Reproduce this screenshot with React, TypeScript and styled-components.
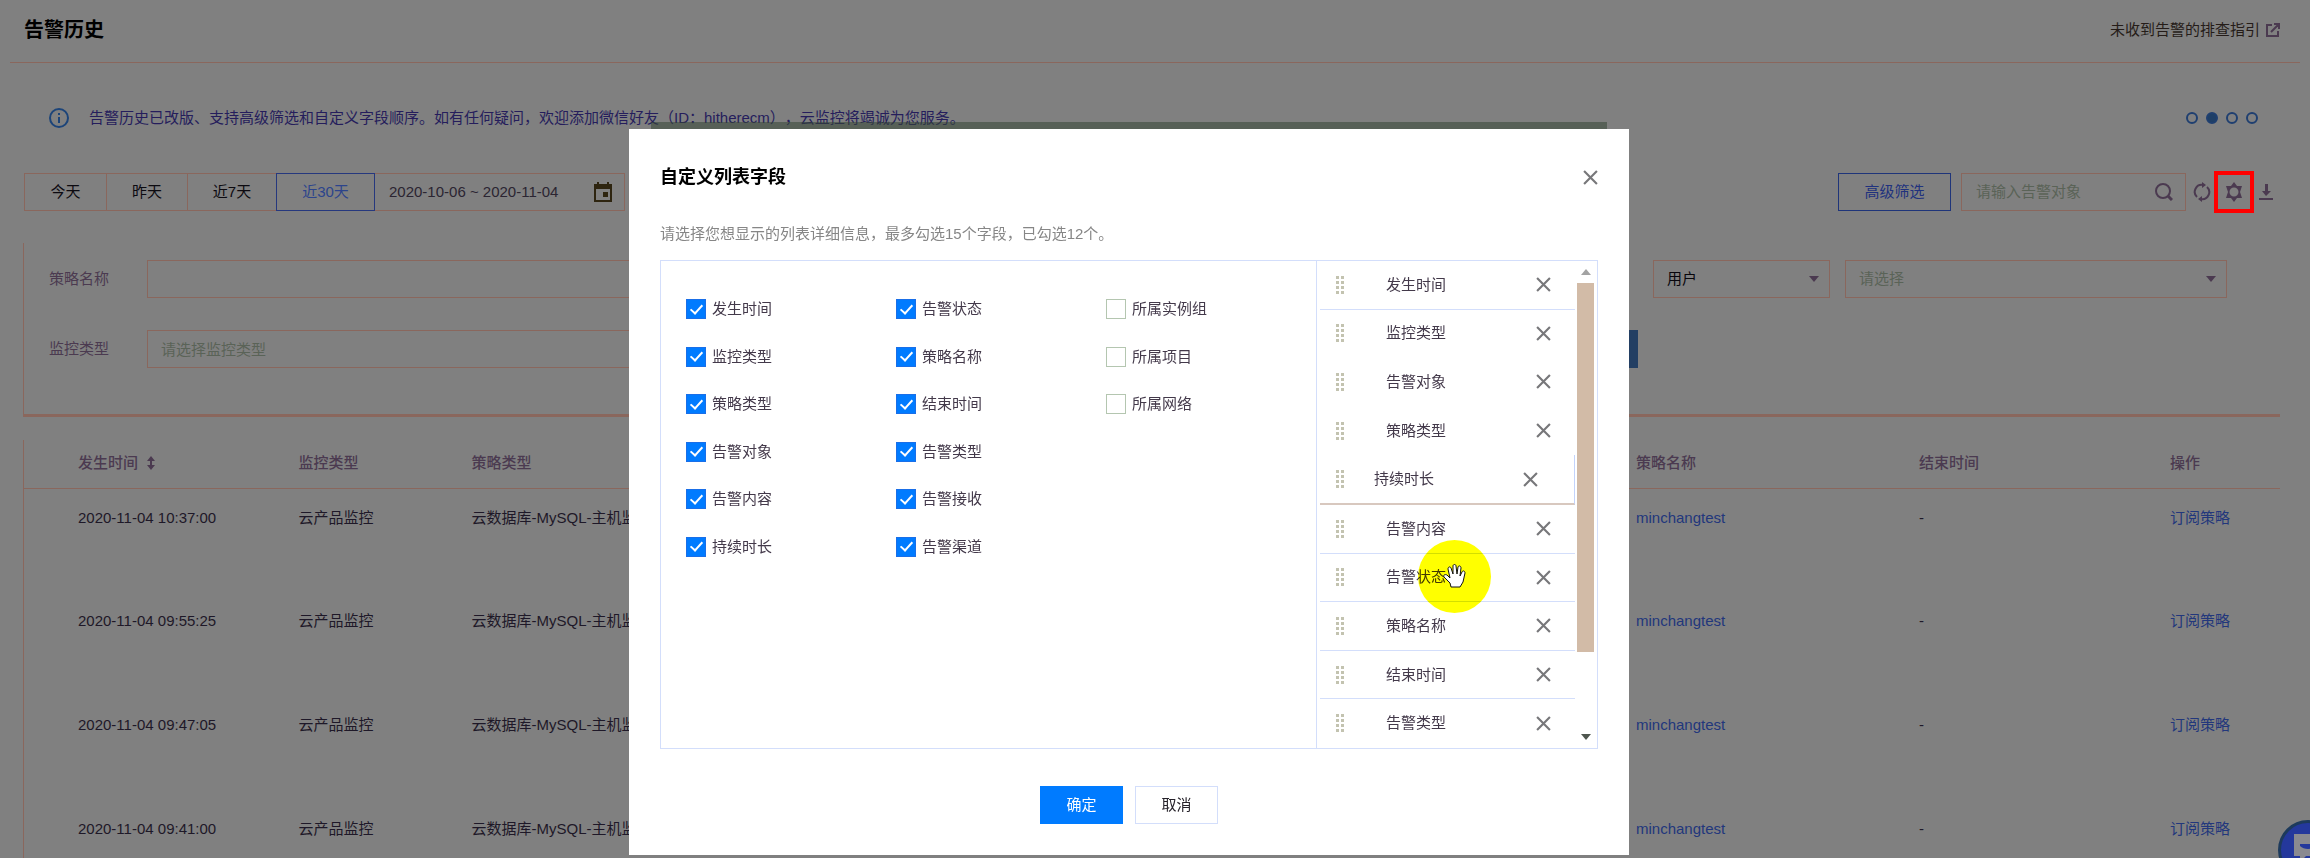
import React from "react";
import styled, { createGlobalStyle, css } from "styled-components";

const line = "#8a675d";
const navy = "#22377c";
const plum = "#4b3a50";

const GlobalStyle = createGlobalStyle`
  * { box-sizing: border-box; }
  body {
    margin: 0;
    background: #808080;
    color: #1e1828;
    font: 15px/24px "Liberation Sans", "Noto Sans CJK SC", sans-serif;
    text-spacing-trim: space-all;
  }
  button, input, select { font: inherit; color: inherit; }
  a { color: ${navy}; text-decoration: none; }
`;

const Page = styled.main`
  height: 100vh;
  overflow: hidden;
  background: #808080;
`;

const Header = styled.header`
  display: flex;
  justify-content: space-between;
  align-items: center;
  height: 63px;
  margin: 0 10px;
  padding: 0 20px 2px 14px;
  border-bottom: 1px solid ${line};
`;

const Title = styled.h1`
  margin: 0;
  font-size: 20px;
  line-height: 28px;
  color: #000;
`;

const GuideLink = styled.a`
  display: flex;
  align-items: center;
  gap: 6px;
  color: #251c18;
  svg { color: ${plum}; }
`;

const Notice = styled.section`
  display: flex;
  align-items: center;
  gap: 19px;
  height: 110px;
  padding: 0 52px 0 48px;
  color: #251d5c;
`;

const NoticeText = styled.p`
  flex: 1;
  margin: 0;
`;

const Pager = styled.div`
  display: flex;
  gap: 8px;
`;

const Dot = styled.button<{ $on?: boolean }>`
  width: 12px;
  height: 12px;
  padding: 0;
  border: 2px solid #1f3f70;
  border-radius: 50%;
  background: ${(p) => (p.$on ? "#1f3f66" : "transparent")};
`;

const Toolbar = styled.section`
  display: flex;
  justify-content: space-between;
  height: 38px;
  padding: 0 34px 0 24px;
`;

const Group = styled.div`
  display: flex;
  align-items: center;
`;

const RangeButton = styled.button<{ $width: number; $active?: boolean }>`
  width: ${(p) => p.$width}px;
  height: 38px;
  padding: 0;
  border: 1px solid ${line};
  border-right-width: 0;
  background: none;
  color: #0c0a10;
  ${(p) =>
    p.$active &&
    css`
      border: 1px solid #26387e;
      color: #2c448c;
    `}
`;

const Box = styled.div<{ $width: number; $flushLeft?: boolean }>`
  display: flex;
  align-items: center;
  width: ${(p) => p.$width}px;
  height: 38px;
  padding: 0 12px;
  border: 1px solid ${line};
  border-left-width: ${(p) => (p.$flushLeft ? 0 : 1)}px;
`;

const PlainInput = styled.input`
  flex: 1;
  min-width: 0;
  padding: 0 0 0 2px;
  border: 0;
  background: none;
  color: #2b2532;
  &::placeholder { color: #5a6357; opacity: 1; }
`;

const AdvancedButton = styled.button`
  width: 113px;
  height: 38px;
  margin-right: 10px;
  padding: 0;
  border: 1px solid #1f357a;
  background: none;
  color: #20327e;
`;

const IconButton = styled.button<{ $marked?: boolean }>`
  display: flex;
  align-items: center;
  justify-content: center;
  width: ${(p) => (p.$marked ? 40 : 20)}px;
  height: ${(p) => (p.$marked ? 42 : 38)}px;
  padding: 0;
  border: ${(p) => (p.$marked ? "4px solid #ff0000" : "0")};
  background: none;
  color: ${plum};
`;

const Tools = styled(Group)`
  padding-left: 6px;
  gap: 2px;
`;

const Filters = styled.section`
  display: grid;
  grid-template-columns: 1fr 177px 382px;
  grid-auto-rows: 38px;
  gap: 32px 15px;
  height: 174px;
  margin: 32px 30px 0 23px;
  padding: 17px 53px 0 25px;
  border-left: 1px solid ${line};
  border-bottom: 3px solid ${line};
`;

const Field = styled.div`
  display: flex;
  align-items: center;
`;

const FieldLabel = styled.label`
  flex: none;
  width: 98px;
  color: ${plum};
`;

const FieldInput = styled.input`
  flex: 1;
  height: 38px;
  padding: 0 13px;
  border: 1px solid ${line};
  background: none;
  &::placeholder { color: #5a6357; opacity: 1; }
`;

const QueryButton = styled.button`
  width: 84px;
  height: 38px;
  margin-left: 120px;
  border: 0;
  background: #233f63;
`;

/* The name field stops short of the user selector. */
const NameInput = styled(FieldInput)`
  margin-right: 120px;
`;

const SelectBox = styled.div<{ $muted?: boolean }>`
  position: relative;
  height: 38px;
  color: ${(p) => (p.$muted ? "#5a6357" : "#08060c")};
  svg {
    position: absolute;
    right: 11px;
    top: 15px;
    color: ${plum};
    pointer-events: none;
  }
`;

const Select = styled.select`
  appearance: none;
  width: 100%;
  height: 38px;
  padding: 0 13px;
  border: 1px solid ${line};
  border-radius: 0;
  background: none;
`;

const History = styled.table`
  width: calc(100% - 53px);
  margin: 23px 30px 0 23px;
  table-layout: fixed;
  border-collapse: collapse;
  border-left: 1px solid ${line};
`;

const Th = styled.th<{ $width?: number; $first?: boolean }>`
  width: ${(p) => (p.$width ? `${p.$width}px` : "auto")};
  height: 48px;
  padding: 0 0 2px ${(p) => (p.$first ? 54 : 0)}px;
  border-bottom: 1px solid ${line};
  text-align: left;
  font-weight: 500;
  color: ${plum};
  svg { margin-left: 8px; vertical-align: -2px; }
`;

const Td = styled.td<{ $first?: boolean }>`
  height: 104px;
  padding: 17px 0 0 ${(p) => (p.$first ? 54 : 0)}px;
  vertical-align: top;
`;

const ChatButton = styled.button`
  position: fixed;
  right: -28px;
  bottom: -22px;
  width: 60px;
  height: 60px;
  padding: 0;
  border: 3px solid #1d3a5c;
  border-radius: 50%;
  background: #24389c;
  color: #8a8a90;
`;

const Overlay = styled.div`
  position: fixed;
  inset: 0;
  display: flex;
  justify-content: center;
  align-items: flex-start;
  padding: 129px 52px 0 0;
`;

const Dialog = styled.section`
  width: 1000px;
  padding: 33px 31px 31px;
  background: #fff;
  color: #43394a;
  box-shadow: 0 -29px 0 -22px rgba(52, 70, 52, 0.55);
`;

const DialogHead = styled.div`
  display: flex;
  justify-content: space-between;
  align-items: center;
  height: 30px;
`;

const DialogTitle = styled.h2`
  margin: 0;
  font-size: 18px;
  line-height: 28px;
  color: #000;
`;

const CloseButton = styled.button`
  display: flex;
  padding: 0;
  border: 0;
  background: none;
  color: #77777a;
`;

const Hint = styled.p`
  margin: 30px 0 14px;
  color: #868686;
`;

const Picker = styled.div`
  display: flex;
  height: 489px;
  border: 1px solid #d3defb;
`;

const Choices = styled.div`
  display: grid;
  grid-template-columns: repeat(3, 210px);
  grid-template-rows: repeat(6, 20px);
  grid-auto-flow: column;
  align-content: space-between;
  flex: 1;
  height: 258px;
  margin: 38px 0 0 25px;
`;

const Choice = styled.label`
  display: flex;
  align-items: center;
  gap: 6px;
  height: 20px;
  white-space: nowrap;
`;

const Tick = styled.input`
  appearance: none;
  display: grid;
  place-items: center;
  width: 20px;
  height: 20px;
  margin: 0;
  border: 1px solid #b4c6b0;
  background: #fff;
  &:checked { border-color: #1a6fe8; background: #007bff; }
  &:checked::after {
    content: "";
    width: 5px;
    height: 10px;
    margin-top: -3px;
    border: solid #fff;
    border-width: 0 2px 2px 0;
    transform: rotate(42deg);
  }
`;

const Chosen = styled.div`
  display: flex;
  width: 281px;
  border-left: 1px solid #d3defb;
`;

const ChosenList = styled.ul`
  display: flex;
  flex-direction: column;
  flex: 1;
  margin: 0;
  padding: 0 2px 0 3px;
  list-style: none;
`;

type Rule = "line" | "none" | "drag";

const Item = styled.li<{ $rule: Rule }>`
  position: relative;
  display: flex;
  flex: 1;
  align-items: center;
  padding: 0 ${(p) => (p.$rule === "drag" ? 36 : 24)}px 0 16px;
  border-bottom: 1px solid ${(p) => (p.$rule === "line" ? "#d3defb" : "transparent")};
  ${(p) =>
    p.$rule === "drag" &&
    css`
      border-bottom: 2px solid #d8c8bf;
      border-right: 1px solid #c3d3fb;
    `}
`;

const ItemName = styled.span<{ $shifted?: boolean }>`
  flex: 1;
  margin-left: ${(p) => (p.$shifted ? 30 : 42)}px;
`;

const Track = styled.div`
  display: flex;
  flex-direction: column;
  align-items: center;
  width: 17px;
  margin-right: 3px;
`;

const TrackEnd = styled.span<{ $bottom?: boolean }>`
  display: flex;
  align-items: center;
  height: 22px;
  margin-top: ${(p) => (p.$bottom ? "auto" : "0")};
  color: ${(p) => (p.$bottom ? "#4f564f" : "#a3a3a3")};
`;

const Thumb = styled.div`
  width: 17px;
  height: 369px;
  background: #d2bba7;
`;

const Halo = styled.span`
  position: absolute;
  left: 98px;
  top: -14px;
  width: 73px;
  height: 73px;
  border-radius: 50%;
  background: #ffff00;
  mix-blend-mode: multiply;
`;

const Pointer = styled.svg`
  position: absolute;
  left: 123px;
  top: 10px;
`;

const Actions = styled.div`
  display: flex;
  justify-content: center;
  gap: 12px;
  margin-top: 37px;
`;

const ActionButton = styled.button<{ $primary?: boolean }>`
  width: 83px;
  height: 38px;
  padding: 0;
  border: 1px solid ${(p) => (p.$primary ? "#007bff" : "#d3defb")};
  background: ${(p) => (p.$primary ? "#007bff" : "#fff")};
  color: ${(p) => (p.$primary ? "#fff" : "#26222a")};
`;

const Caret = ({ up, size = 10 }: { up?: boolean; size?: number }) => (
  <svg width={size} height="8" viewBox="0 0 10 8" preserveAspectRatio="none" aria-hidden="true">
    <path d={up ? "M0 7L5 1l5 6z" : "M0 1h10L5 7z"} fill="currentColor" />
  </svg>
);

const Cross = ({ size }: { size: number }) => (
  <svg width={size} height={size} viewBox="0 0 14 14" fill="none" stroke="currentColor" strokeWidth="2" aria-hidden="true">
    <path d="M1 1l12 12M13 1L1 13" />
  </svg>
);

const Grip = () => (
  <svg width="8" height="18" viewBox="0 0 8 18" fill="#c3c3b0" aria-hidden="true">
    {[0, 5, 10, 15].map((y) => (
      <React.Fragment key={y}>
        <rect x="0" y={y} width="3" height="3" />
        <rect x="5" y={y} width="3" height="3" />
      </React.Fragment>
    ))}
  </svg>
);

const choices: [string, boolean][] = [
  ["发生时间", true], ["监控类型", true], ["策略类型", true],
  ["告警对象", true], ["告警内容", true], ["持续时长", true],
  ["告警状态", true], ["策略名称", true], ["结束时间", true],
  ["告警类型", true], ["告警接收", true], ["告警渠道", true],
  ["所属实例组", false], ["所属项目", false], ["所属网络", false],
];

const chosen: [string, Rule][] = [
  ["发生时间", "line"], ["监控类型", "none"], ["告警对象", "none"],
  ["策略类型", "none"], ["持续时长", "drag"], ["告警内容", "line"],
  ["告警状态", "line"], ["策略名称", "line"], ["结束时间", "line"],
  ["告警类型", "none"],
];

const times = ["2020-11-04 10:37:00", "2020-11-04 09:55:25", "2020-11-04 09:47:05", "2020-11-04 09:41:00"];

export default function App() {
  return (
    <>
      <GlobalStyle />
      <Page>
        <Header>
          <Title>告警历史</Title>
          <GuideLink href="#guide">
            未收到告警的排查指引
            <svg width="14" height="14" viewBox="0 0 14 14" fill="none" stroke="currentColor" strokeWidth="2" aria-hidden="true">
              <path d="M6 2H1v11h11V8M8 1h5v5M13 1L5 9" />
            </svg>
          </GuideLink>
        </Header>

        <Notice>
          <svg width="22" height="22" viewBox="0 0 22 22" fill="none" stroke="#1c4479" strokeWidth="2" aria-hidden="true">
            <circle cx="11" cy="11" r="9" />
            <path d="M11 10v6M11 6v2" />
          </svg>
          <NoticeText>
            告警历史已改版、支持高级筛选和自定义字段顺序。如有任何疑问，欢迎添加微信好友（ID：hitherecm），云监控将竭诚为您服务。
          </NoticeText>
          <Pager>
            {[1, 2, 3, 4].map((n) => (
              <Dot key={n} type="button" $on={n === 2} aria-label={`第${n}条`} />
            ))}
          </Pager>
        </Notice>

        <Toolbar>
          <Group>
            <RangeButton type="button" $width={82}>今天</RangeButton>
            <RangeButton type="button" $width={81}>昨天</RangeButton>
            <RangeButton type="button" $width={89}>近7天</RangeButton>
            <RangeButton type="button" $width={99} $active>近30天</RangeButton>
            <Box $width={250} $flushLeft>
              <PlainInput aria-label="日期范围" defaultValue="2020-10-06 ~ 2020-11-04" />
              <svg width="18" height="20" viewBox="0 0 18 20" fill="#2e2510" aria-hidden="true">
                <path fillRule="evenodd" d="M3 0h2v2h8V0h2v2h3v18H0V2h3zM2 7v11h14V7z" />
                <rect x="9" y="10" width="5" height="5" />
              </svg>
            </Box>
          </Group>
          <Group>
            <AdvancedButton type="button">高级筛选</AdvancedButton>
            <Box $width={225}>
              <PlainInput aria-label="告警对象" placeholder="请输入告警对象" />
              <svg width="18" height="18" viewBox="0 0 18 18" fill="none" stroke={plum} strokeWidth="2" aria-hidden="true">
                <circle cx="8" cy="8" r="7" />
                <path d="M13 13l4 4" strokeWidth="3" />
              </svg>
            </Box>
            <Tools>
              <IconButton type="button" aria-label="刷新">
                <svg width="18" height="20" viewBox="0 0 18 20" fill="none" stroke="currentColor" strokeWidth="2" aria-hidden="true">
                  <path d="M4 15a7 7 0 0 1 6-12M14 5a7 7 0 0 1-6 12" />
                  <path d="M9 0l4 3-4 3zM9 14l-4 3 4 3z" fill="currentColor" stroke="none" />
                </svg>
              </IconButton>
              <IconButton type="button" $marked aria-label="自定义列表字段">
                <svg width="18" height="20" viewBox="0 0 18 20" aria-hidden="true">
                  <path
                    fill="currentColor"
                    fillRule="evenodd"
                    d="M9 0l3 4h5l-2 6 2 6h-5l-3 4-3-4H1l2-6-2-6h5zM9 5.500a4.500 4.500 0 1 0 0 9 4.500 4.500 0 0 0 0-9z"
                  />
                </svg>
              </IconButton>
              <IconButton type="button" aria-label="下载">
                <svg width="14" height="18" viewBox="0 0 14 18" fill="currentColor" aria-hidden="true">
                  <path d="M6 1h3v7h3l-5 5-4-5h3zM0 15h14v2H0z" />
                </svg>
              </IconButton>
            </Tools>
          </Group>
        </Toolbar>

        <Filters>
          <Field>
            <FieldLabel htmlFor="policy">策略名称</FieldLabel>
            <NameInput id="policy" />
          </Field>
          <SelectBox>
            <Select aria-label="接收类型">
              <option>用户</option>
            </Select>
            <Caret />
          </SelectBox>
          <SelectBox $muted>
            <Select aria-label="接收对象">
              <option>请选择</option>
            </Select>
            <Caret />
          </SelectBox>
          <Field>
            <FieldLabel htmlFor="monitor">监控类型</FieldLabel>
            <FieldInput id="monitor" placeholder="请选择监控类型" />
            <QueryButton type="button" aria-label="查询" />
          </Field>
        </Filters>

        <History>
          <thead>
            <tr>
              <Th $width={275} $first>
                发生时间
                <svg width="10" height="14" viewBox="0 0 10 14" fill="currentColor" aria-hidden="true">
                  <path d="M5 0l4 5H6v4h3l-4 5-4-5h3V5H1z" />
                </svg>
              </Th>
              <Th $width={173}>监控类型</Th>
              <Th>策略类型</Th>
              <Th $width={283}>策略名称</Th>
              <Th $width={251}>结束时间</Th>
              <Th $width={110}>操作</Th>
            </tr>
          </thead>
          <tbody>
            {times.map((time) => (
              <tr key={time}>
                <Td $first>{time}</Td>
                <Td>云产品监控</Td>
                <Td>云数据库-MySQL-主机监控</Td>
                <Td><a href="#policy">minchangtest</a></Td>
                <Td>-</Td>
                <Td><a href="#subscribe">订阅策略</a></Td>
              </tr>
            ))}
          </tbody>
        </History>
      </Page>

      <ChatButton type="button" aria-label="在线咨询">
        <svg width="28" height="30" viewBox="0 0 28 30" aria-hidden="true">
          <path d="M0 2h28v22H12l-6 6v-6H0z" fill="currentColor" />
          <path d="M6 12h16v2c-4 4-12 4-16 0z" fill="#24389c" />
        </svg>
      </ChatButton>

      <Overlay>
        <Dialog role="dialog" aria-labelledby="dialog-title">
          <DialogHead>
            <DialogTitle id="dialog-title">自定义列表字段</DialogTitle>
            <CloseButton type="button" aria-label="关闭"><Cross size={15} /></CloseButton>
          </DialogHead>
          <Hint>请选择您想显示的列表详细信息，最多勾选15个字段，已勾选12个。</Hint>
          <Picker>
            <Choices>
              {choices.map(([name, on]) => (
                <Choice key={name}>
                  <Tick type="checkbox" defaultChecked={on} />
                  {name}
                </Choice>
              ))}
            </Choices>
            <Chosen>
              <ChosenList>
                {chosen.map(([name, rule]) => (
                  <Item key={name} $rule={rule}>
                    <Grip />
                    <ItemName $shifted={rule === "drag"}>{name}</ItemName>
                    <CloseButton type="button" aria-label={`移除${name}`}><Cross size={15} /></CloseButton>
                    {name === "告警状态" && (
                      <>
                        <Halo />
                        <Pointer width="23" height="24" viewBox="0 0 23 24" aria-hidden="true">
                          <path
                            d="M8 23L7 19 1 13c-1-2 1-3 3-2l3 3L5 5c0-2 2-3 3-1l2 6V2c0-2 3-2 3 0l1 8 1-7c1-2 3-1 3 1l-1 8 2-4c1-2 3-1 3 1l-2 9-3 5z"
                            fill="#fff"
                            stroke="#111"
                            strokeWidth="1"
                            strokeLinejoin="round"
                          />
                        </Pointer>
                      </>
                    )}
                  </Item>
                ))}
              </ChosenList>
              <Track>
                <TrackEnd><Caret up /></TrackEnd>
                <Thumb />
                <TrackEnd $bottom><Caret /></TrackEnd>
              </Track>
            </Chosen>
          </Picker>
          <Actions>
            <ActionButton type="button" $primary>确定</ActionButton>
            <ActionButton type="button">取消</ActionButton>
          </Actions>
        </Dialog>
      </Overlay>
    </>
  );
}
